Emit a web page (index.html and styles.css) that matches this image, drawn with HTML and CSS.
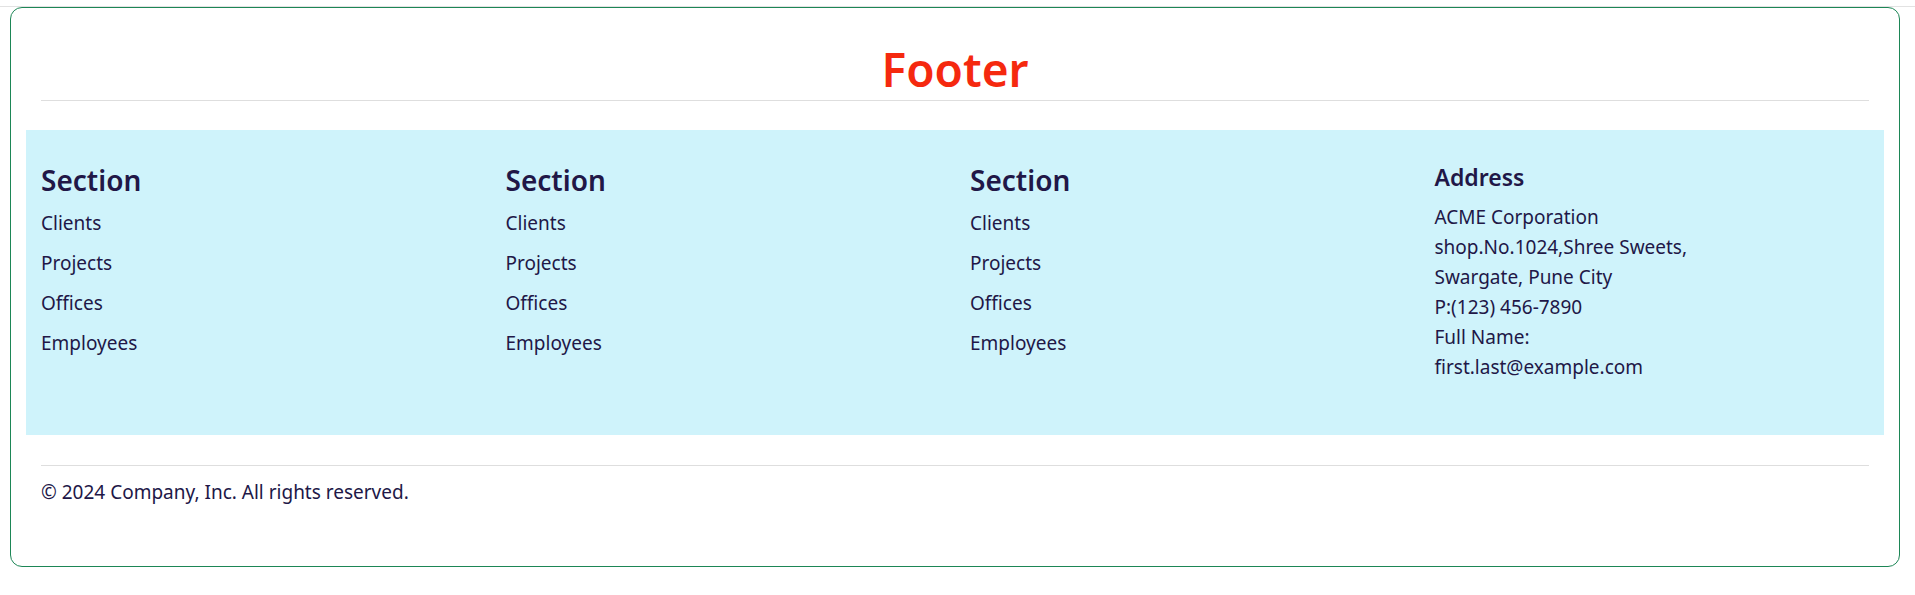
FILE: index.html
```html
<!DOCTYPE html>
<html lang="en">
<head>
<meta charset="utf-8">
<title>Footer</title>
<link rel="stylesheet" href="styles.css">
</head>
<body>
<div class="page-rule"></div>
<div class="frame">
  <div class="inner">
    <h1 class="title">Footer</h1>
  </div>
  <footer class="band">
    <div class="col">
      <h4 class="col-head">Section</h4>
      <ul class="links">
        <li>Clients</li>
        <li>Projects</li>
        <li>Offices</li>
        <li>Employees</li>
      </ul>
    </div>
    <div class="col">
      <h4 class="col-head">Section</h4>
      <ul class="links">
        <li>Clients</li>
        <li>Projects</li>
        <li>Offices</li>
        <li>Employees</li>
      </ul>
    </div>
    <div class="col">
      <h4 class="col-head">Section</h4>
      <ul class="links">
        <li>Clients</li>
        <li>Projects</li>
        <li>Offices</li>
        <li>Employees</li>
      </ul>
    </div>
    <div class="col">
      <h5 class="addr-head">Address</h5>
      <address class="addr">
        ACME Corporation<br>
        shop.No.1024,Shree Sweets,<br>
        Swargate, Pune City<br>
        P:(123) 456-7890<br>
        Full Name:<br>
        first.last@example.com
      </address>
    </div>
  </footer>
  <div class="inner">
    <p class="copy">© 2024 Company, Inc. All rights reserved.</p>
  </div>
</div>
</body>
</html>
```
FILE: styles.css
```css
* { box-sizing: border-box; }
html, body { margin: 0; padding: 0; background: #fff; }
body {
  font-family: "Noto Sans", "Open Sans", sans-serif;
  font-size: 19px;
  line-height: 30px;
  color: #211747;
}
.page-rule {
  height: 1px;
  margin-top: 6px;
  background: #e2e2e2;
}
.frame {
  margin: 0 15px 0 10px;
  border: 1px solid #1d8656;
  border-radius: 12px;
  padding: 0 15px 15px;
}
.inner { padding: 0 15px; }
.title {
  margin: 0;
  padding-top: 31px;
  padding-bottom: 1px;
  border-bottom: 1px solid #dedede;
  text-align: center;
  font-size: 46px;
  line-height: 60px;
  font-weight: 600;
  color: #f5290f;
}
.band {
  margin-top: 29px;
  background: #cff3fb;
  display: grid;
  grid-template-columns: repeat(4, 1fr);
  padding: 32px 0 53px;
}
.col { padding: 0 15px; }
.col-head {
  margin: 0 0 10px;
  font-size: 28px;
  line-height: 36px;
  font-weight: 600;
}
.addr-head {
  margin: 0 0 10px;
  font-size: 23px;
  line-height: 30px;
  font-weight: 600;
}
.links { list-style: none; margin: 0; padding: 0; }
.links li { margin-bottom: 10px; }
.addr { font-style: normal; }
.copy {
  margin: 30px 0 0;
  border-top: 1px solid #dedede;
  padding: 11px 0 44px;
}
```
